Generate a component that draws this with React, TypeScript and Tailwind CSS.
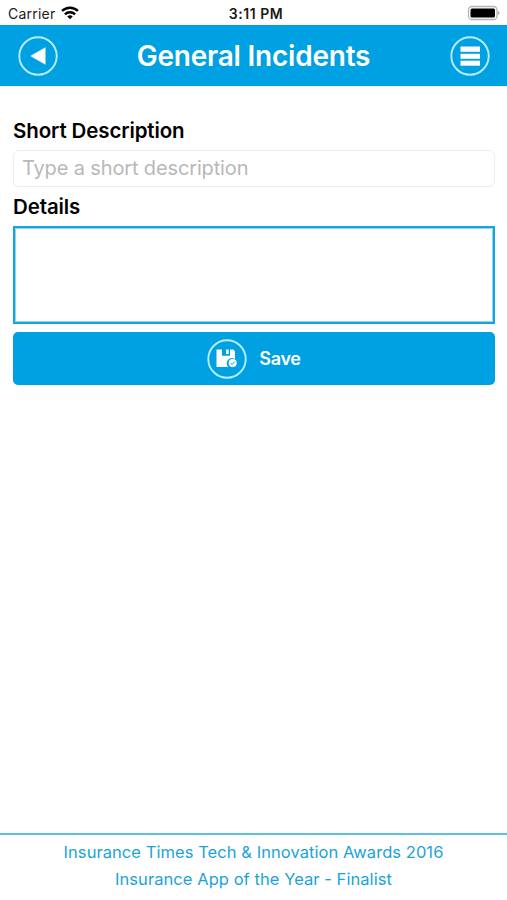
import React from 'react';

function StatusBar() {
  return (
    <div className="grid h-[25px] shrink-0 grid-cols-3 items-center bg-white text-[#1a1a1a]">
      <div className="flex items-center gap-[6px] pl-[8px] pt-[3px]">
        <span className="text-[14px] leading-[20px] tracking-[0.22px]">Carrier</span>
        <svg width="18" height="14" viewBox="0 0 17 13" fill="none" stroke="#000" strokeWidth="2.3" className="-mt-[2px]">
          <path d="M1 4.6a10.8 10.8 0 0 1 15 0" />
          <path d="M3.7 7.7a6.9 6.9 0 0 1 9.6 0" />
          <path d="M8.5 12.4 5.9 9.8a3.7 3.7 0 0 1 5.2 0z" fill="#000" stroke="none" />
        </svg>
      </div>
      <div className="pl-[5px] pt-[3px] text-center text-[14px] font-semibold leading-[20px] tracking-[0.55px]">3:11 PM</div>
      <div className="flex justify-end pr-[7px]">
        <svg width="33" height="16" viewBox="0 0 33 16">
          <rect x="1.500" y="1.5" width="28.500" height="13" rx="3.5" fill="#fff" stroke="#b5b5b5" strokeWidth="1.3" />
          <rect x="3.500" y="3.5" width="24.500" height="9" rx="1.5" fill="#000" />
          <path d="M31.200 6v4c1.6-.5 1.6-3.500 0-4z" fill="#999" />
        </svg>
      </div>
    </div>
  );
}

function CircleIcon({ children }: { children: React.ReactNode }) {
  return (
    <svg width="40" height="40" viewBox="0 0 40 40" fill="#fff" className="shrink-0">
      <circle cx="20" cy="20" r="18.700" fill="none" stroke="#b8ecff" strokeWidth="1.9" />
      {children}
    </svg>
  );
}

export default function App() {
  return (
    <div className="flex h-[900px] w-[507px] flex-col overflow-hidden bg-white font-['Inter','Liberation_Sans',sans-serif]">
      <StatusBar />
      <header className="flex h-[61px] shrink-0 items-center justify-between bg-[#00a1e2] pl-[18px] pr-[17px]">
        <button aria-label="Back">
          <CircleIcon>
            <path d="M12.300 20 27.500 11.300v17.400z" />
          </CircleIcon>
        </button>
        <h1 className="-ml-px text-[28px] font-semibold leading-[36px] tracking-[-0.22px] text-white">General Incidents</h1>
        <button aria-label="Menu">
          <CircleIcon>
            <rect x="10.500" y="10.500" width="19.500" height="5.300" />
            <rect x="10.500" y="17.800" width="19.500" height="5" />
            <rect x="10.500" y="24.700" width="19.500" height="5" />
          </CircleIcon>
        </button>
      </header>
      <main className="flex flex-1 flex-col pl-[13px] pr-[12px] pt-[33px]">
        <label htmlFor="short" className="h-[31px] text-[20.500px] font-semibold leading-[24px] tracking-[-0.12px] text-black">
          <span>Short Description</span>
        </label>
        <input
          id="short"
          placeholder="Type a short description"
          className="h-[37px] w-full rounded-[6px] border border-[#ececec] px-[8px] pb-[2px] text-[20px] tracking-[-0.14px] outline-none placeholder:text-[#b8b8b8]"
        />
        <label htmlFor="details" className="mt-[8px] h-[31px] text-[20.500px] font-semibold leading-[24px] tracking-[-0.12px] text-black">
          <span>Details</span>
        </label>
        <textarea id="details" className="h-[98px] w-full resize-none border-2 border-[#17a3dc] shadow-[inset_0_0_0_1px_#8fd8f3] outline-none" />
        <button className="mt-[8px] flex h-[53px] w-full items-center justify-center gap-[12px] rounded-[5px] bg-[#00a1e2] text-[18px] font-semibold tracking-[-0.3px] text-white">
          <CircleIcon>
            <path d="M9.500 10.500H15v6.300h8v-6.300h3.200l1.800 1.800v8a5 5 0 0 0-6.500 7.800h-12z" />
            <path d="M19 10.500h2.700v4.500H19z" />
            <circle cx="25.700" cy="24" r="4" />
            <path d="m23.600 24.100 1.500 1.400 2.700-3" fill="none" stroke="#00a1e2" />
          </CircleIcon>
          <span>Save</span>
        </button>
      </main>
      <footer className="h-[67px] shrink-0 border-t-2 border-[#5dc0e8] pt-[4px] text-center text-[16.500px] leading-[27px] tracking-[0.06px] text-[#1ba3d8]">
        <p>Insurance Times Tech &amp; Innovation Awards 2016</p>
        <p>Insurance App of the Year - Finalist</p>
      </footer>
    </div>
  );
}
